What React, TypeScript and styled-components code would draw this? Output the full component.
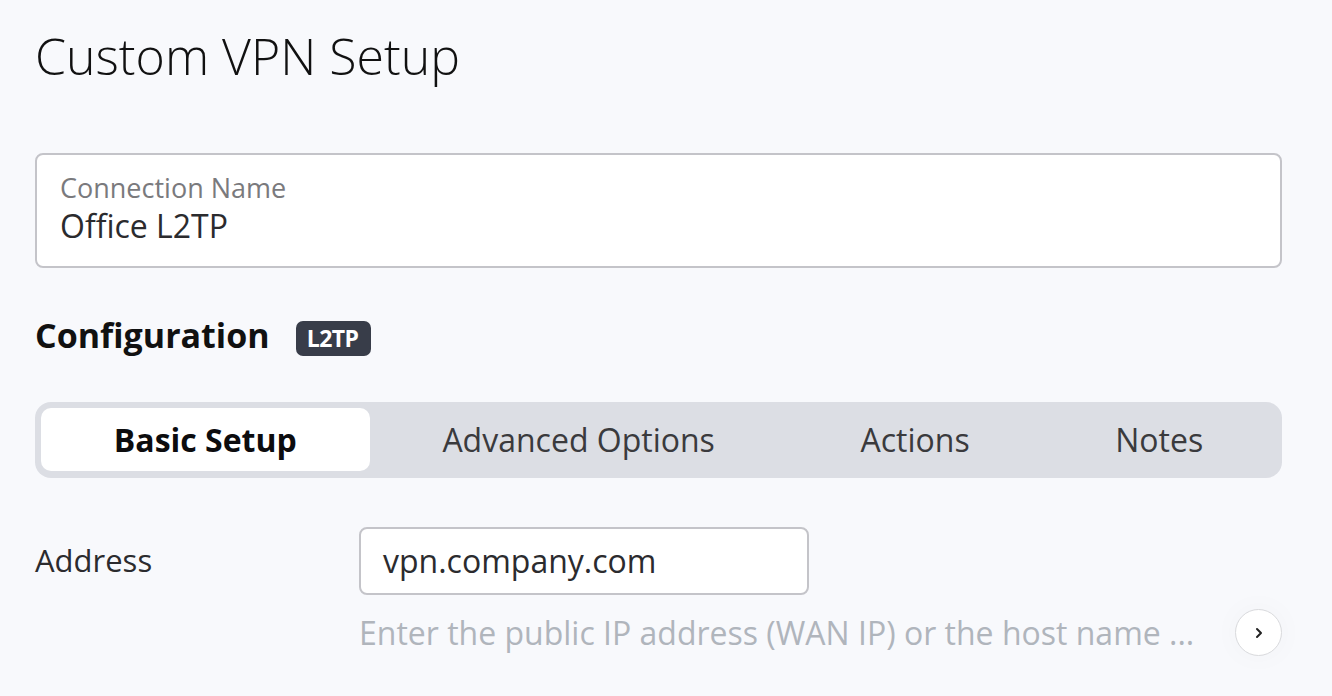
import React from "react";
import styled, { createGlobalStyle } from "styled-components";

const GlobalStyle = createGlobalStyle`
  html, body {
    margin: 0;
    padding: 0;
    background: #f8f9fc;
    font-family: "Open Sans", "Noto Sans", sans-serif;
  }
`;

const tabs = ["Basic Setup", "Advanced Options", "Actions", "Notes"];

const Page = styled.div`
  padding: 22px 50px 0 35px;
  box-sizing: border-box;
  width: 1332px;
  height: 696px;
  overflow: hidden;
`;

const Title = styled.h1`
  margin: 0;
  font-size: 50px;
  font-weight: 300;
  color: #111;
  line-height: 68px;
`;

const NameCard = styled.div`
  margin-top: 63px;
  background: #fff;
  border: 2px solid #c4c4c9;
  border-radius: 8px;
  padding: 16px 23px 19px;
  display: flex;
  flex-direction: column;
`;

const FieldLabel = styled.span`
  font-size: 27px;
  color: #7a7a7d;
  line-height: 34px;
`;

const FieldValue = styled.span`
  font-size: 32px;
  color: #2b2b2e;
  line-height: 42px;
`;

const SectionHeader = styled.div`
  margin-top: 45px;
  display: flex;
  align-items: center;
  gap: 26px;
`;

const SectionTitle = styled.h2`
  margin: 0;
  font-size: 34px;
  font-weight: 700;
  color: #111;
  line-height: 44px;
`;

const Badge = styled.span`
  background: #383d49;
  color: #fff;
  font-size: 23px;
  font-weight: 700;
  letter-spacing: -0.5px;
  border-radius: 7px;
  padding: 0 12px 0 11px;
  line-height: 35px;
  margin-top: 6px;
`;

const TabBar = styled.div`
  margin-top: 45px;
  background: #dcdee4;
  border-radius: 16px;
  padding: 6px 6px 7px;
  display: flex;
`;

const Tab = styled.div<{ $active?: boolean }>`
  flex: 1 1 auto;
  text-align: center;
  font-size: 32px;
  line-height: 63px;
  border-radius: 10px;
  color: ${(p) => (p.$active ? "#0c0c0e" : "#3a3a3d")};
  font-weight: ${(p) => (p.$active ? 700 : 400)};
  background: ${(p) => (p.$active ? "#fff" : "transparent")};
`;

const FieldRow = styled.div`
  margin-top: 49px;
  display: grid;
  grid-template-columns: 324px 1fr;
`;

const RowLabel = styled.div`
  font-size: 31px;
  color: #2b2b2e;
  line-height: 66px;
`;

const RowBody = styled.div`
  display: flex;
  flex-direction: column;
  min-width: 0;
`;

const TextInput = styled.div`
  width: 450px;
  height: 68px;
  box-sizing: border-box;
  border: 2px solid #c4c4c9;
  border-radius: 8px;
  background: #fff;
  padding: 0 22px;
  font-size: 32px;
  line-height: 64px;
  color: #2b2b2e;
`;

const HelpRow = styled.div`
  margin-top: 14px;
  display: flex;
  align-items: center;
  gap: 30px;
`;

const HelpText = styled.div`
  flex: 1;
  min-width: 0;
  font-size: 32px;
  line-height: 46px;
  color: #b0b5bc;
  white-space: nowrap;
  overflow: hidden;
`;

const RoundButton = styled.button`
  flex: none;
  width: 47px;
  height: 47px;
  border-radius: 50%;
  border: 1.5px solid #d9dadd;
  background: #fff;
  display: flex;
  align-items: center;
  justify-content: center;
  padding: 0;
  box-shadow: 0 0 30px rgba(0, 0, 0, 0.03);
`;

export default function App() {
  return (
    <>
      <GlobalStyle />
      <Page>
        <Title>Custom VPN Setup</Title>
        <NameCard>
          <FieldLabel>Connection Name</FieldLabel>
          <FieldValue>Office L2TP</FieldValue>
        </NameCard>
        <SectionHeader>
          <SectionTitle>Configuration</SectionTitle>
          <Badge>L2TP</Badge>
        </SectionHeader>
        <TabBar>
          {tabs.map((t, i) => (
            <Tab key={t} $active={i === 0}>
              {t}
            </Tab>
          ))}
        </TabBar>
        <FieldRow>
          <RowLabel>Address</RowLabel>
          <RowBody>
            <TextInput>vpn.company.com</TextInput>
            <HelpRow>
              <HelpText>
                Enter the public IP address (WAN IP) or the host name ...
              </HelpText>
              <RoundButton aria-label="More">
                <svg width="14" height="14" viewBox="0 0 14 14" fill="none">
                  <path
                    d="M5 3l4 4-4 4"
                    stroke="#222"
                    strokeWidth="2"
                    strokeLinecap="round"
                    strokeLinejoin="round"
                  />
                </svg>
              </RoundButton>
            </HelpRow>
          </RowBody>
        </FieldRow>
      </Page>
    </>
  );
}
